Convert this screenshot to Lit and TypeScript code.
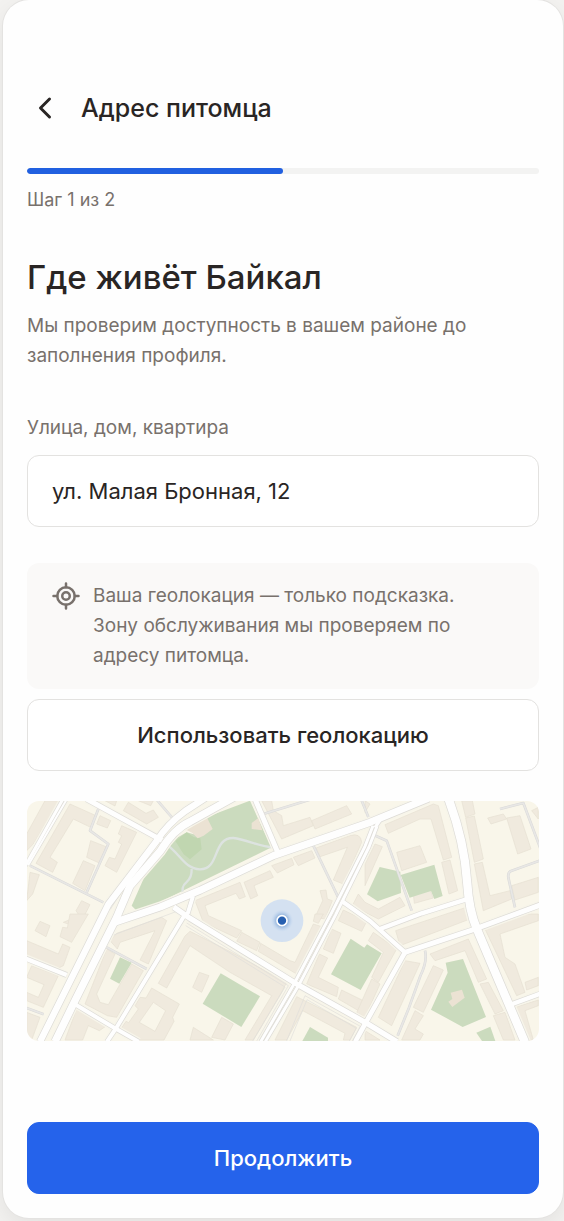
import { LitElement, html, css, svg } from "lit";
import { customElement, state } from "lit/decorators.js";

interface Block {
  x: number;
  y: number;
  shapes: string[];
}

/* Building outlines, grouped by city block; each block has its own origin. */
const BLOCKS: Block[] = [
  {
    x: -21,
    y: -21,
    shapes: [
      "M75 20H118L40 150L20 170V120Z",
      "M150 30L228 65L212 100L160 75L90 190L112 205L98 235L48 208Z",
      "M240 65L272 80L262 102L230 90Z",
      "M212 140L258 158L240 208L200 190Z",
      "M190 200L225 215L195 290L158 268Z",
      "M305 95L350 115L290 235L255 215L268 190L285 195L305 150L295 145L305 125L295 120Z",
      "M325 25L378 58L400 48L415 70L380 90L310 50Z",
      "M255 20H290L285 36Z",
      "M355 20H400L392 35Z",
      "M30 235L58 242L38 300L20 320Z",
      "M185 320L210 332L175 400L130 385L178 365L168 350Z",
    ],
  },
  {
    x: 489,
    y: -21,
    shapes: [
      "M215 20H245L250 50L275 65L280 95L360 70L370 95L275 135Z",
      "M365 80L470 35L485 60L375 105Z",
      "M245 215L305 193L312 212L262 237Z",
      "M310 190L365 170L375 192L325 215Z",
      "M378 162L480 125Q512 115 515 145L460 270L430 258L472 160L390 188Z",
      "M162 265L240 230L250 250L192 275L203 305L182 315Z",
      "M15 320L150 265L166 308L148 315L138 298L45 335L55 365L155 410L140 432L40 385Z",
      "M390 290L408 288L412 315L427 320L405 375L375 370L398 320Z",
    ],
  },
  {
    x: 1014,
    y: -21,
    shapes: [
      "M60 92L205 30L220 35L260 190L235 198L198 75L165 75L70 118Z",
      "M95 175L165 155L185 205L110 230Z",
      "M230 205L255 198L278 290L252 300Z",
      "M30 150L52 158L0 275V210Z",
      "M-20 300L0 325L40 345L105 310L120 335L40 375L-38 335Z",
      "M290 20H322L330 60L302 70Z",
      "M302 72L328 66L355 195L328 205Z",
      "M328 210L352 205L375 305L435 290L440 315L355 350Z",
      "M368 72L415 60L425 75L378 90Z",
      "M425 72L465 65L498 165L458 180Z",
      "M440 275L520 250V295L450 318Z",
      "M500 50L520 40V75Z",
      "M0 20L15 30L0 55Z",
      "M145 300L195 288L205 312L148 328Z",
    ],
  },
  {
    x: -21,
    y: 339,
    shapes: [
      "M60 22L90 35L78 68L45 50Z",
      "M150 0H205L155 85L120 68L128 40L142 42Z",
      "M20 80L115 120L128 90L150 100L130 155L110 165L20 125Z",
      "M35 155L115 185L70 280L20 260V235L55 250L72 212L20 190Z",
      "M20 295L60 310L35 378H20Z",
      "M270 80L290 58L425 10L440 20L385 150L360 138L405 50L300 85L292 105Z",
      "M260 105L285 120L230 240L240 265L265 272L335 150L370 170L290 310L262 305L195 270Z",
      "M395 222L478 270L458 310L462 322L432 378H345L302 345L318 322L326 326L355 285L345 275L360 250L378 252ZM400 265L437 290L405 352L358 325Z",
      "M170 285L260 335L238 350L205 335L188 378H135Z",
    ],
  },
  {
    x: 489,
    y: 339,
    shapes: [
      "M155 55L210 85L200 110L140 82Z",
      "M212 88L300 140L315 145L370 30L395 38L320 180L205 112Z",
      "M0 52L125 115L290 205L272 240L190 378H165L245 245L120 175L0 95L-70 222L-95 208L-15 66Z",
      "M28 175L57 185L35 235L8 220Z",
      "M95 310L130 330L105 378L65 370Z",
      "M10 340L70 378H0Z",
      "M375 0H400L385 28L370 22Z",
      "M425 45L453 58L430 118L400 105Z",
      "M388 120L413 132L385 190L445 220L440 248L350 210Z",
      "M455 228L540 270V310L445 255Z",
      "M320 248L420 298L500 340L480 378H460L465 358L338 290L290 378H255Z",
    ],
  },
  {
    x: 1014,
    y: 339,
    shapes: [
      "M92 50L310 -22L315 15L105 95Z",
      "M-65 -12L5 22L-10 52L-80 20Z",
      "M25 55L95 105L40 205L20 190L55 115L10 80Z",
      "M120 140L165 148L80 335L40 310Z",
      "M205 155L235 168L175 295L145 280Z",
      "M195 120L310 75L365 195L340 205L300 110L210 140Z",
      "M345 210L370 205L415 290L390 300Z",
      "M360 45L470 0H520V20L405 60L420 130L450 150L480 235L455 245Z",
      "M480 205L520 190V215L485 228Z",
      "M150 290L175 305L150 345L175 360L165 378H110Z",
      "M385 305L420 295L450 378H415Z",
      "M450 280L520 258V275L480 290L505 378H490Z",
      "M20 195L45 210L0 310L-25 296Z",
      "M0 350L45 378H0Z",
    ],
  },
];

const GREENS = [
  "M479 94L500 100L545 46L669 -1L692 50L734 139L489 259L380 313L329 329L314 314L385 154L409 119L450 110Z",
  "M1058 198L1120 212L1122 276L1052 301L1020 280Z",
  "M1121 222L1222 191L1247 285L1222 294L1212 270L1148 290Z",
  "M279 469L314 485L277 548L249 533Z",
  "M581 517L699 586L643 678L527 608Z",
  "M971 413L1012 440L1020 430L1064 457L1001 567L912 520Z",
  "M1256 485L1308 474L1377 648L1307 678L1212 626L1262 515Z",
  "M849 678L903 710V722H825Z",
  "M1348 695L1390 677L1405 720H1365Z",
];

const ROADS: { d: string; w: number }[] = [
  { d: "M109 -8L-8 200", w: 9 },
  { d: "M121 -8L4 192", w: 6 },
  { d: "M179 -6L405 118", w: 15 },
  { d: "M590 -45L475 30Q420 70 389 120L244 310L39 722", w: 19 },
  { d: "M640 -22L489 62Q440 85 400 150L309 255L269 349L144 599L84 722", w: 22 },
  { d: "M262 364L400 318L519 268L739 164L1029 64L1204 -8", w: 21 },
  { d: "M684 -6L754 158", w: 15 },
  { d: "M1038 74L1014 136L913 337L801 549L701 722", w: 9 },
  { d: "M1050 76L1026 138L925 343L815 553L715 722", w: 9 },
  { d: "M1000 72L1060 56L1044 80", w: 10 },
  { d: "M944 300L1029 360L1134 454", w: 13 },
  { d: "M1059 384L1184 337L1325 293", w: 13 },
  { d: "M1134 454L1339 386L1540 312", w: 15 },
  { d: "M1264 -8Q1312 120 1320 240Q1326 330 1350 385L1394 489L1494 724", w: 25 },
  { d: "M1450 611L1540 578", w: 13 },
  { d: "M1134 454L1014 669L985 722", w: 14 },
  { d: "M440 318L489 352L809 549L1014 664L1110 722", w: 16 },
  { d: "M498 285L483 335L469 349L269 679L240 722", w: 12 },
  { d: "M-8 471L119 522", w: 13 },
  { d: "M139 607L259 679L335 722", w: 12 },
];

const LANES = [
  "M9 194L229 304",
  "M214 24L189 89L244 129L179 274",
  "M389 -4L439 54",
  "M859 134L934 290",
  "M709 39L849 -4",
  "M1003 -4L1024 48",
  "M1034 99L1079 119L1154 329",
  "M1419 24L1489 6L1540 142",
  "M1540 178L1452 210Q1442 214 1444 230L1464 319",
  "M1194 449Q1202 480 1180 525L1146 620L1112 704",
  "M239 439L359 504",
  "M-4 620L50 640",
];

const CONTOURS = [
  "M479 366L784 554L688 722",
  "M476 374L774 558L676 722",
  "M778 722L834 584L1000 676L975 722",
  "M788 722L840 596L988 682L966 722",
  "M360 150L250 325",
  "M452 330L260 402",
];

@customElement("city-map")
export class CityMap extends LitElement {
  static styles = css`
    :host {
      display: block;
    }
    .map {
      display: block;
      width: 100%;
      height: auto;
      border-radius: 12px;
    }
    .land { fill: #f9f6ea; }
    .building {
      fill: #f0eade;
      fill-rule: evenodd;
      stroke: #e5dfd2;
      stroke-width: 2;
    }
    .green { fill: #cbdbbe; }
    .grove { fill: #c0d6b0; }
    .pavilion { fill: #ebe2d3; }
    .line { fill: none; stroke-linejoin: round; }
    .verge { stroke: #f7f5ea; }
    .casing { stroke: #dddbd6; }
    .road { stroke: #fefefe; }
    .lane-edge { stroke: #d9d9d8; stroke-width: 8; }
    .lane { stroke: #e8e7e5; stroke-width: 5; }
    .contour { stroke: #dfdedb; stroke-width: 2; }
    .path { stroke: #dde3e0; stroke-width: 7; }
    .halo { fill: #cbdcf3; fill-opacity: 0.8; }
    .pin { fill: #2860b0; stroke: #fff; stroke-width: 5; }
  `;

  render() {
    return html`
      <svg class="map" viewBox="0 0 1536 720" role="img" aria-label="Карта района">
        <defs>
          <radialGradient id="glow">
            <stop offset="0.4" stop-color="#7fa5d4" />
            <stop offset="1" stop-color="#c4d9f3" stop-opacity="0" />
          </radialGradient>
        </defs>
        <rect class="land" width="1536" height="720" />
        ${BLOCKS.map(
          (b) => svg`<g transform="translate(${b.x} ${b.y})">
            ${b.shapes.map((d) => svg`<path class="building" d=${d} />`)}
          </g>`,
        )}
        ${GREENS.map((d) => svg`<path class="green" d=${d} />`)}
        <path class="grove" d="M479 94L500 108L520 112L524 145L489 175L470 160L445 120Z" />
        <path class="pavilion" d="M474 84L539 48L557 84L530 104L512 112L496 96Z" />
        <path class="pavilion" d="M674 66L694 51L706 88L674 84Z" />
        <path class="pavilion" d="M1271 575L1305 566L1313 590L1276 618L1264 602L1276 594Z" />
        <path class="line path" d="M409 124C460 155 470 203 519 205C580 205 555 110 619 111C660 116 690 135 740 140" />
        <path class="line path" d="M494 204Q495 230 478 244Q460 258 470 285" />
        ${ROADS.map((r) => svg`<path class="line verge" d=${r.d} stroke-width=${r.w + 12} />`)}
        ${LANES.map((d) => svg`<path class="line lane-edge" d=${d} />`)}
        ${LANES.map((d) => svg`<path class="line lane" d=${d} />`)}
        ${CONTOURS.map((d) => svg`<path class="line contour" d=${d} />`)}
        ${ROADS.map((r) => svg`<path class="line casing" d=${r.d} stroke-width=${r.w + 4} />`)}
        ${ROADS.map((r) => svg`<path class="line road" d=${r.d} stroke-width=${r.w} />`)}
        <circle class="halo" cx="765" cy="359" r="64" />
        <circle cx="765" cy="359" r="34" fill="url(#glow)" />
        <circle class="pin" cx="765" cy="359" r="15" />
      </svg>
    `;
  }
}

@customElement("app-root")
export class AppRoot extends LitElement {
  @state() private address = "ул. Малая Бронная, 12";
  @state() private step = 1;
  private readonly steps = 2;

  static styles = css`
    :host {
      display: block;
      box-sizing: border-box;
      min-height: 100vh;
      padding: 0 1px 3px 3px;
      background: #f3f2f0;
      font-family: Inter, "Noto Sans", sans-serif;
      color: #292524;
    }
    *,
    *::before {
      box-sizing: border-box;
    }
    .screen {
      display: flex;
      flex-direction: column;
      min-height: calc(100vh - 3px);
      padding: 81px 24px 24px;
      background: #fefefe;
      border-radius: 26px;
      box-shadow: 0 0 0 1px #e4e3e1, 0 8px 24px #00000012;
    }
    .header {
      display: flex;
      align-items: center;
      gap: 18px;
      height: 54px;
    }
    .back {
      display: flex;
      padding: 0;
      border: 0;
      background: none;
      color: inherit;
      cursor: pointer;
    }
    .back-icon {
      width: 36px;
      height: 36px;
    }
    .icon {
      fill: none;
      stroke: currentColor;
      stroke-width: 2;
      stroke-linecap: round;
      stroke-linejoin: round;
      flex: none;
    }
    .title {
      margin: 0;
      font-size: 25px;
      line-height: 36px;
      font-weight: 500;
    }
    .track {
      height: 6px;
      margin-top: 33px;
      border-radius: 3px;
      background: #f3f3f2;
      overflow: hidden;
    }
    .fill {
      height: 100%;
      border-radius: 3px;
      background: #2160e0;
    }
    .step {
      margin: 12px 0 0;
      font-size: 18px;
      line-height: 27px;
      color: #78716c;
    }
    .heading {
      margin: 42px 0 0;
      font-size: 33px;
      line-height: 44px;
      font-weight: 500;
    }
    .lead {
      margin: 12px 0 0;
      font-size: 19px;
      line-height: 30px;
      color: #78716c;
    }
    .label {
      margin-top: 42px;
      font-size: 19px;
      line-height: 30px;
      color: #78716c;
    }
    .field {
      width: 100%;
      height: 72px;
      margin: 12px 0 0;
      padding: 0 24px;
      border: 1px solid #e3e2e0;
      border-radius: 12px;
      background: #fff;
      color: inherit;
      font: 400 22px/36px Inter, "Noto Sans", sans-serif;
    }
    .note {
      display: flex;
      gap: 12px;
      margin-top: 36px;
      padding: 18px 48px 18px 24px;
      border-radius: 12px;
      background: #faf9f8;
      color: #78716c;
    }
    .locate {
      width: 30px;
      height: 30px;
    }
    .note-text {
      margin: 0;
      font-size: 19px;
      line-height: 30px;
    }
    .button {
      width: 100%;
      height: 72px;
      border: 1px solid #e3e2e0;
      border-radius: 12px;
      background: #fff;
      color: inherit;
      font: 500 22px/36px Inter, "Noto Sans", sans-serif;
      cursor: pointer;
    }
    .secondary {
      margin: 10px 0 30px;
    }
    .footer {
      margin-top: auto;
      padding-top: 48px;
    }
    .primary {
      border-color: #2563eb;
      background: #2563eb;
      color: #fff;
    }
  `;

  private onInput(event: Event) {
    this.address = (event.target as HTMLInputElement).value;
  }

  render() {
    return html`
      <main class="screen">
        <header class="header">
          <button class="back" type="button" aria-label="Назад">
            <svg class="icon back-icon" viewBox="0 0 24 24"><path d="m15 18-6-6 6-6" /></svg>
          </button>
          <h2 class="title">Адрес питомца</h2>
        </header>
        <div class="track">
          <div class="fill" style="width:${(this.step / this.steps) * 100}%"></div>
        </div>
        <p class="step">Шаг ${this.step} из ${this.steps}</p>
        <h1 class="heading">Где живёт Байкал</h1>
        <p class="lead">Мы проверим доступность в вашем районе до заполнения профиля.</p>
        <label class="label" for="address">Улица, дом, квартира</label>
        <input class="field" id="address" type="text" .value=${this.address} @input=${this.onInput} />
        <section class="note">
          <svg class="icon locate" viewBox="0 0 24 24">
            <path d="M2 12h3M19 12h3M12 2v3M12 19v3" />
            <circle cx="12" cy="12" r="7" />
            <circle cx="12" cy="12" r="3" />
          </svg>
          <p class="note-text">
            Ваша геолокация — только подсказка. Зону обслуживания мы проверяем по адресу питомца.
          </p>
        </section>
        <button class="button secondary" type="button">Использовать геолокацию</button>
        <city-map></city-map>
        <footer class="footer">
          <button class="button primary" type="button">Продолжить</button>
        </footer>
      </main>
    `;
  }
}
